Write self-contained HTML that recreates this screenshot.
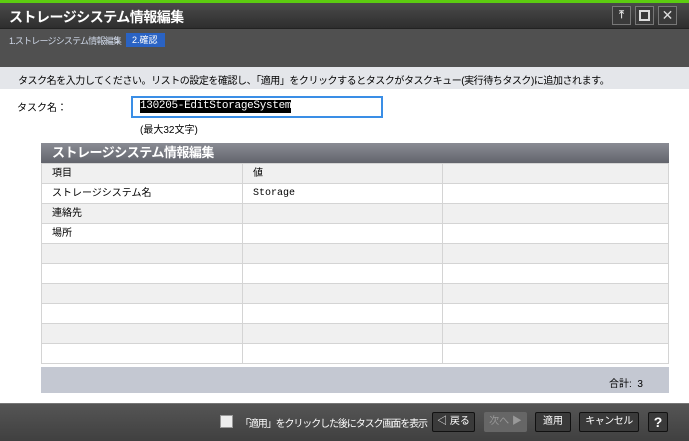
<!DOCTYPE html><html><head><meta charset="utf-8"><style>
*{margin:0;padding:0;box-sizing:border-box}
body{width:689px;height:441px;overflow:hidden;background:#fff;font-family:"Liberation Sans","Noto Sans CJK JP",sans-serif;font-size:11px;color:#000;position:relative}
.a{position:absolute;white-space:nowrap}
.btn{position:absolute;top:412px;height:20px;border:1px solid #111;border-radius:2px;background:#3a3a3a;color:#fff;font-size:10px;line-height:18px;text-align:center}
table{border-collapse:collapse;position:absolute;left:41px;top:163px;width:628px}
td{height:20px;border:1px solid #d4d4d4;padding-left:10px;font-size:10px;line-height:18px}
tr:nth-child(odd) td{background:#f0f0f0}
</style></head><body>
<div class="a" style="left:0;top:0;width:689px;height:3px;background:#5ccc10"></div>
<div class="a" style="left:0;top:3px;width:689px;height:25px;background:linear-gradient(#4a4a4a,#2e2e2e)"></div>
<div class="a" style="left:9px;top:7px;color:#fff;font-weight:bold;font-size:14px;letter-spacing:-0.5px">ストレージシステム情報編集</div>
<div class="a" style="left:612px;top:6px;width:19px;height:19px;border:1px solid #777;background:#3a3a3a;color:#ddd;text-align:center;font-weight:bold;line-height:17px">⤒</div>
<div class="a" style="left:635px;top:6px;width:19px;height:19px;border:1px solid #777;background:#3a3a3a"><div style="margin:3px;width:11px;height:11px;border:2px solid #ddd"></div></div>
<div class="a" style="left:658px;top:6px;width:19px;height:19px;border:1px solid #777;background:#3a3a3a;color:#ddd;text-align:center;font-size:14px;line-height:17px">✕</div>
<div class="a" style="left:0;top:28px;width:689px;height:39px;background:#505050;border-top:1px solid #222"></div>
<div class="a" style="left:9px;top:34px;color:#cfd8e8;font-size:9px;letter-spacing:-0.8px;line-height:14px">1.ストレージシステム情報編集</div>
<div class="a" style="left:115px;top:34px;color:#cfd8e8;font-size:9px;line-height:14px">&gt;</div>
<div class="a" style="left:126px;top:33px;width:39px;height:14px;background:#2a63c4;color:#fff;font-size:9px;padding-left:6px;line-height:14px">2.確認</div>
<div class="a" style="left:0;top:67px;width:689px;height:22px;background:#e4e6ea"></div>
<div class="a" style="left:18px;top:72px;font-size:10px;letter-spacing:-0.45px">タスク名を入力してください。リストの設定を確認し、「適用」をクリックするとタスクがタスクキュー(実行待ちタスク)に追加されます。</div>
<div class="a" style="left:17px;top:99px;font-size:10px">タスク名：</div>
<div class="a" style="left:131px;top:96px;width:252px;height:22px;border:2px solid #3a8ee6;background:#fff"></div>
<div class="a" style="left:140px;top:100px;background:#000;color:#fff;font-family:'Liberation Mono',monospace;font-size:11px;line-height:13px;letter-spacing:-0.3px">130205-EditStorageSystem</div>
<div class="a" style="left:140px;top:121px;font-size:10px">(最大32文字)</div>
<div class="a" style="left:41px;top:143px;width:628px;height:20px;background:linear-gradient(#8a8c94,#62646c);color:#fff;font-weight:bold;font-size:13px;padding-left:11px;line-height:20px;letter-spacing:-0.5px">ストレージシステム情報編集</div>
<table>
<tr><td style="width:201px">項目</td><td style="width:200px">値</td><td></td></tr>
<tr><td>ストレージシステム名</td><td style="font-family:'Liberation Mono',monospace">Storage</td><td></td></tr>
<tr><td>連絡先</td><td></td><td></td></tr>
<tr><td>場所</td><td></td><td></td></tr>
<tr><td></td><td></td><td></td></tr><tr><td></td><td></td><td></td></tr><tr><td></td><td></td><td></td></tr><tr><td></td><td></td><td></td></tr><tr><td></td><td></td><td></td></tr><tr><td></td><td></td><td></td></tr>
</table>
<div class="a" style="left:41px;top:367px;width:628px;height:26px;background:#c4c8d2"></div>
<div class="a" style="left:609px;top:375px;font-size:10px">合計: &nbsp;3</div>
<div class="a" style="left:0;top:403px;width:689px;height:38px;background:linear-gradient(#555,#404040);border-top:1px solid #777"></div>
<div class="a" style="left:220px;top:415px;width:13px;height:13px;background:#eee;border:1px solid #999"></div>
<div class="a" style="left:240px;top:415px;color:#fff;font-size:10px;letter-spacing:-1.1px">「適用」をクリックした後にタスク画面を表示</div>
<div class="btn" style="left:432px;width:43px">◁ 戻る</div>
<div class="btn" style="left:484px;width:43px;background:#666;color:#999;border-color:#666">次へ ▶</div>
<div class="btn" style="left:535px;width:36px">適用</div>
<div class="btn" style="left:579px;width:60px;letter-spacing:-0.5px">キャンセル</div>
<div class="btn" style="left:648px;width:20px;font-weight:bold;font-size:14px">?</div>
</body></html>
